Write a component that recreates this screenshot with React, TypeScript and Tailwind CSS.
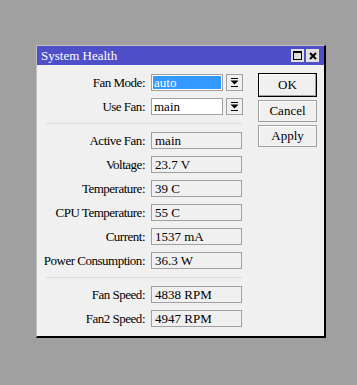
type Field = { label: string; value: string }

const readings: Field[] = [
  { label: "Active Fan", value: "main" },
  { label: "Voltage", value: "23.7 V" },
  { label: "Temperature", value: "39 C" },
  { label: "CPU Temperature", value: "55 C" },
  { label: "Current", value: "1537 mA" },
  { label: "Power Consumption", value: "36.3 W" },
]

const speeds: Field[] = [
  { label: "Fan Speed", value: "4838 RPM" },
  { label: "Fan2 Speed", value: "4947 RPM" },
]

function Label({ text }: { text: string }) {
  return (
    <div className="flex w-[108px] shrink-0 justify-end whitespace-nowrap leading-[17px] tracking-[-0.5px]">
      {text}:
    </div>
  )
}

function ArrowButton() {
  return (
    <div className="ml-[3px] flex h-[17px] w-[17px] items-center justify-center border border-[#a0a0a0] bg-[#f0f0f0]">
      <svg width="9" height="9" viewBox="0 0 9 9">
        <rect x="1" y="0" width="7" height="1" fill="#000" />
        <path d="M0.5 2.5 H8.5 L4.5 6.5 Z" fill="#000" />
        <rect x="1" y="8" width="7" height="1" fill="#000" />
      </svg>
    </div>
  )
}

function SelectRow({ label, value, active }: { label: string; value: string; active?: boolean }) {
  return (
    <div className="flex h-[17px] items-center gap-[6px]">
      <Label text={label} />
      <div className="flex">
        <div className="h-[17px] w-[72px] border border-[#a0a0a0] bg-white p-px">
          <div className={active ? "h-full bg-[#3399ff] pl-px leading-[13px] text-white" : "h-full pl-px leading-[13px]"}>
            {value}
          </div>
        </div>
        <ArrowButton />
      </div>
    </div>
  )
}

function ReadRow({ label, value }: Field) {
  return (
    <div className="flex h-[17px] items-center gap-[6px]">
      <Label text={label} />
      <div className="h-[17px] w-[91px] border border-[#a0a0a0] bg-[#f0f0f0] pl-[3px] leading-[15px]">{value}</div>
    </div>
  )
}

function Separator() {
  return (
    <div className="py-px">
      <div className="ml-[9px] w-[196px] border-t border-[#dcdcdc]" />
    </div>
  )
}

function DlgButton({ text, primary }: { text: string; primary?: boolean }) {
  return (
    <div
      className={
        primary
          ? "flex h-[24px] w-[59px] items-center justify-center border border-black bg-[#f0f0f0] shadow-[inset_-1px_-1px_0_#a0a0a0,inset_1px_1px_0_#fff]"
          : "flex h-[22px] w-[59px] items-center justify-center border border-[#a0a0a0] bg-[#f0f0f0] shadow-[inset_1px_1px_0_#fff]"
      }
    >
      {text}
    </div>
  )
}

export default function App() {
  return (
    <div
      className="h-[385px] w-[357px] bg-[#a0a0a0] pl-[36px] pt-[45px] text-[13px] text-black"
      style={{ fontFamily: '"Liberation Serif", "DejaVu Serif", serif' }}
    >
      <div className="h-[293px] w-[290px] border-b-2 border-r-2 border-l border-t border-b-black border-l-[#c0c0c0] border-r-black border-t-[#c0c0c0] bg-[#f0f0f0]">
        <div className="flex h-[19px] items-center justify-between bg-[#4f4fc9] pl-[4px] pr-[5px] text-white">
          <span className="leading-[19px]">System Health</span>
          <div className="flex gap-[2px]">
            <div className="flex h-[13px] w-[13px] items-center justify-center bg-[#e0e0e0]">
              <div className="h-[9px] w-[9px] border border-black border-t-2" />
            </div>
            <div className="flex h-[13px] w-[13px] items-center justify-center bg-[#e0e0e0]">
              <svg width="8" height="8" viewBox="0 0 8 8">
                <path d="M1 1 L7 7 M7 1 L1 7" stroke="#000" strokeWidth="2" />
              </svg>
            </div>
          </div>
        </div>
        <div className="flex">
          <div className="flex flex-col gap-[7px] pt-[9px]">
            <SelectRow label="Fan Mode" value="auto" active />
            <SelectRow label="Use Fan" value="main" />
            <Separator />
            {readings.map((r) => (
              <ReadRow key={r.label} {...r} />
            ))}
            <Separator />
            {speeds.map((r) => (
              <ReadRow key={r.label} {...r} />
            ))}
          </div>
          <div className="ml-[15px] flex flex-col gap-[3px] pt-[8px]">
            <DlgButton text="OK" primary />
            <DlgButton text="Cancel" />
            <DlgButton text="Apply" />
          </div>
        </div>
      </div>
    </div>
  )
}
